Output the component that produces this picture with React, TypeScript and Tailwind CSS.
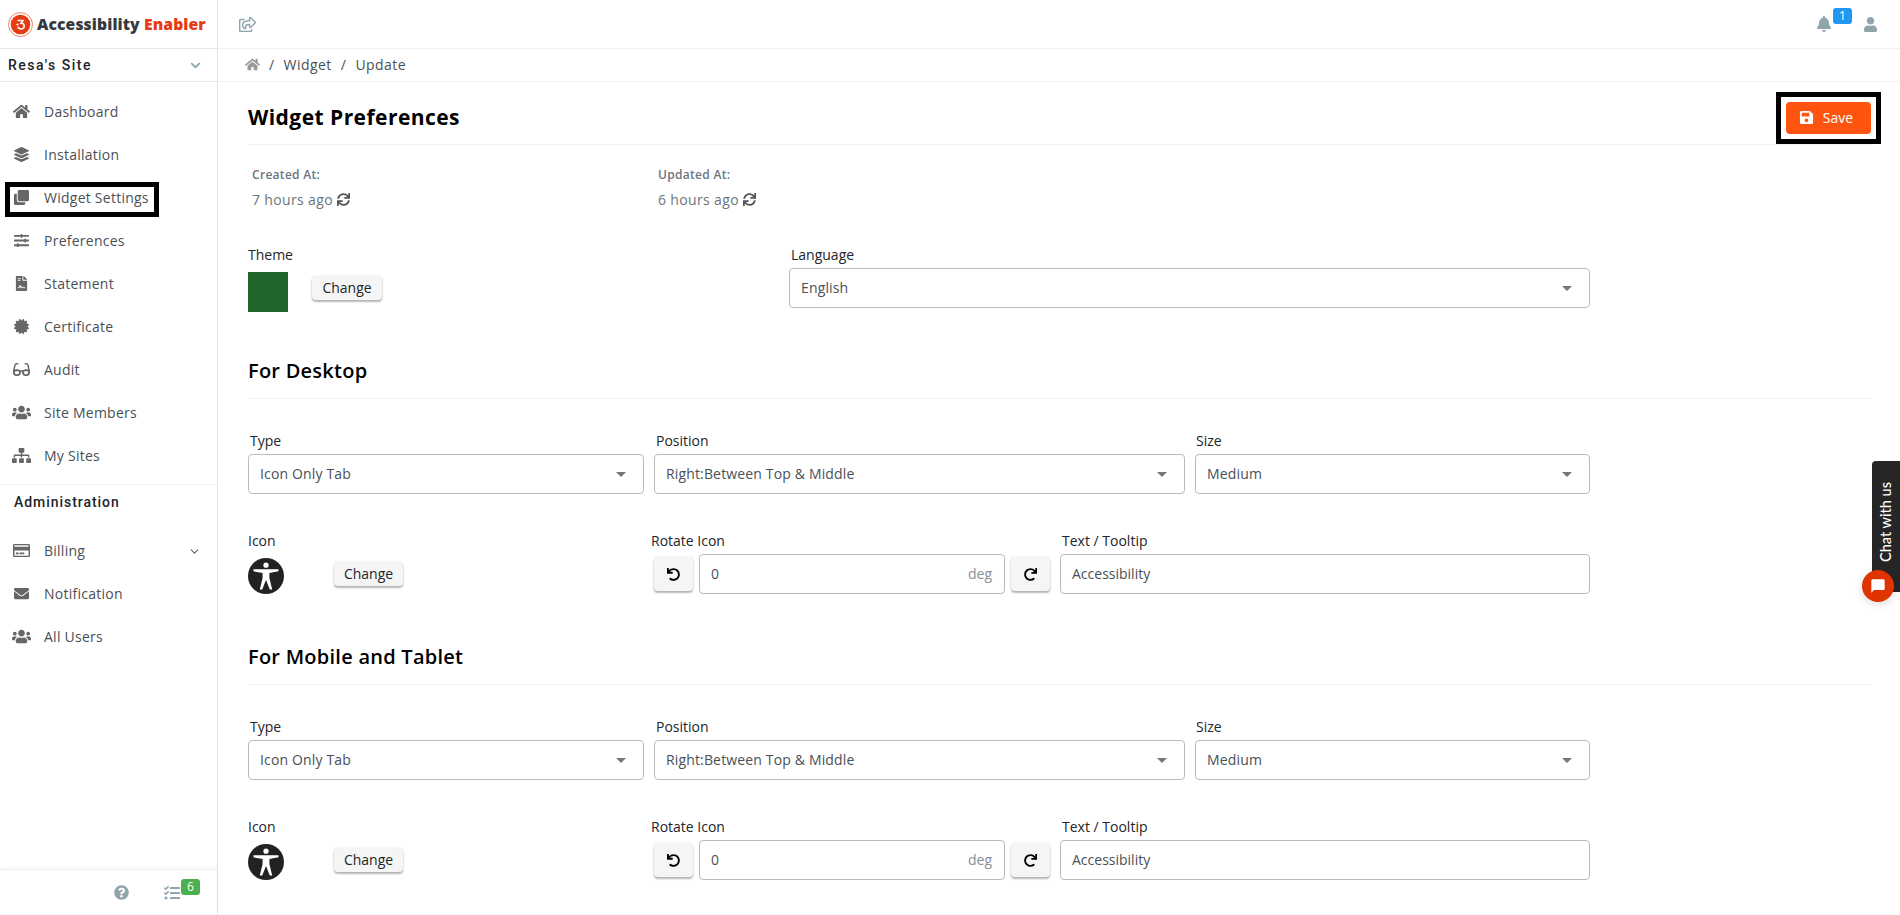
import * as React from 'react';
import {
  FaBell, FaCertificate, FaChevronDown, FaClone, FaRegCreditCard, FaEnvelope, FaFileContract, FaGlasses, FaHome,
  FaLayerGroup, FaQuestionCircle, FaRedo, FaRegShareSquare, FaSave, FaSitemap, FaSlidersH, FaSync, FaTasks,
  FaUndo, FaUser, FaUsers,
} from 'react-icons/fa';
import { FiChevronDown } from 'react-icons/fi';
import { MdChatBubble } from 'react-icons/md';

const mainNav = [
  { label: 'Dashboard', icon: FaHome, size: 'text-[17px]' },
  { label: 'Installation', icon: FaLayerGroup, size: 'text-[15px]' },
  { label: 'Widget Settings', icon: FaClone, size: 'text-[15px]', marked: true },
  { label: 'Preferences', icon: FaSlidersH, size: 'text-[15px]' },
  { label: 'Statement', icon: FaFileContract, size: 'text-[15px]' },
  { label: 'Certificate', icon: FaCertificate, size: 'text-[15px]' },
  { label: 'Audit', icon: FaGlasses, size: 'text-[17px]' },
  { label: 'Site Members', icon: FaUsers, size: 'text-[19px]' },
  { label: 'My Sites', icon: FaSitemap, size: 'text-[19px]' },
];

const adminNav = [
  { label: 'Billing', icon: FaRegCreditCard, size: 'text-[17px]', expandable: true },
  { label: 'Notification', icon: FaEnvelope, size: 'text-[15px]' },
  { label: 'All Users', icon: FaUsers, size: 'text-[19px]' },
];

const NavItem = ({ item }) => {
  const Icon = item.icon;
  return (
    <li className="relative flex h-[43px] items-center text-[14px] tracking-[0.25px] text-[#495057]">
      <span className={`flex w-[44px] shrink-0 justify-center pr-[1px] text-[#666] ${item.size}`}>
        <Icon />
      </span>
      <span>{item.label}</span>
      {item.expandable && <FiChevronDown className="absolute right-[16px] top-[16px] text-[13px] text-[#666]" />}
      {item.marked && <span className="absolute left-[5px] top-[6px] h-[35px] w-[154px] border-[5px] border-black" />}
    </li>
  );
};

const Logo = () => (
  <div className="flex items-center">
    <svg width="25" height="25" viewBox="0 0 25 25" className="ml-[8px] mr-[4px] shrink-0">
      <circle cx="12.5" cy="12.5" r="12" fill="#fff" stroke="#e8552d" strokeWidth="0.7" />
      <circle cx="12.5" cy="12.5" r="9.800" fill="#e63a14" />
      <path d="M9.500 8.500h5.500l-2 2.700c2 0 3.200 1.100 3.200 2.700 0 1.800-1.400 3-3.200 3-1.500 0-2.700-.8-3.100-2.200" fill="none" stroke="#fff" strokeWidth="1.500" />
      <circle cx="9.500" cy="12.500" r="1.100" fill="#fff" />
    </svg>
    <span className="mt-[1px] whitespace-nowrap font-['Open_Sans',sans-serif] text-[15.7px] font-extrabold tracking-[0.1px] text-[#343a40]">
      Accessibility <span className="text-[#e63a14]">Enabler</span>
    </span>
  </div>
);

const Sidebar = () => (
  <aside className="flex h-full w-[218px] shrink-0 flex-col border-r border-[#dee2e6]">
    <div className="flex h-[49px] items-center border-b border-[#e4e9f0]">
      <Logo />
    </div>
    <div className="flex h-[33px] items-center justify-between border-b border-[#e4e9f0] pl-[8px] pr-[16px]">
      <span className="font-['Roboto',sans-serif] text-[14px] font-medium tracking-[1.5px] text-[#212529]">Resa's Site</span>
      <FaChevronDown className="text-[11px] text-[#90a4ae]" />
    </div>
    <ul className="pt-[8px]">
      {mainNav.map((item) => (
        <NavItem key={item.label} item={item} />
      ))}
    </ul>
    <div className="mt-[7px] border-t border-[#f2f2f2] pl-[14px] pt-[7px] font-['Roboto',sans-serif] text-[14px] font-medium leading-[21px] tracking-[0.95px] text-[#212529]">
      Administration
    </div>
    <ul className="mt-[16px]">
      {adminNav.map((item) => (
        <NavItem key={item.label} item={item} />
      ))}
    </ul>
    <div className="relative mt-auto flex h-[46px] items-center border-t border-[#eeeeee] pl-[114px] shadow-[0_-2px_4px_rgba(0,0,0,0.03)]">
      <FaQuestionCircle className="text-[15px] text-[#90a4ae]" />
      <FaTasks className="ml-[35px] text-[16px] text-[#90a4ae]" />
      <span className="absolute left-[181px] top-[9px] flex h-[16px] w-[19px] items-center justify-center rounded-[3px] bg-[#4caf50] text-[12px] text-white">
        6
      </span>
    </div>
  </aside>
);

const TopBar = () => (
  <div className="flex h-[49px] shrink-0 items-center justify-between border-b border-[#eef0f2] pl-[21px] pr-[22px]">
    <FaRegShareSquare className="text-[17px] text-[#90a4ae]" />
    <div className="relative flex items-center">
      <FaBell className="text-[16px] text-[#90a4ae]" />
      <span className="absolute left-[17px] top-[-8px] flex h-[16px] w-[19px] items-center justify-center rounded-[3px] bg-[#2196f3] text-[12px] text-white">
        1
      </span>
      <FaUser className="ml-[31px] text-[15px] text-[#90a4ae]" />
    </div>
  </div>
);

const Breadcrumb = () => (
  <div className="flex h-[33px] shrink-0 items-center gap-[9px] border-b border-[#eef0f2] pb-[2px] pl-[27px] text-[14px] tracking-[0.45px] text-[#495057]">
    <FaHome className="text-[15px] text-[#9a9a9a]" />
    <span>/</span>
    <span>Widget</span>
    <span>/</span>
    <span>Update</span>
  </div>
);

const Label = ({ children, className = '' }) => (
  <div className={`text-[14px] leading-[21px] text-[#212529] ${className}`}>{children}</div>
);

const Select = ({ value }) => (
  <div className="flex h-[40px] items-center justify-between rounded-[4px] border border-[#bbbbbb] pb-[2px] pl-[11px] pr-[17px] text-[14px] tracking-[0.15px] text-[#495057]">
    <span>{value}</span>
    <span className="mt-[2px] h-0 w-0 border-x-[5px] border-t-[5px] border-x-transparent border-t-[#777]" />
  </div>
);

const PushButton = ({ children, className = '' }) => (
  <button className={`flex items-center justify-center rounded-[4px] bg-[#f5f5f5] text-[14px] text-[#212529] shadow-[0_2px_2px_rgba(0,0,0,0.28),0_0_2px_rgba(0,0,0,0.12)] ${className}`}>
    {children}
  </button>
);

const AccessIcon = () => (
  <svg width="36" height="36" viewBox="0 0 36 36" className="shrink-0">
    <circle cx="18" cy="18" r="18" fill="#222222" />
    <circle cx="18" cy="7.200" r="2.600" fill="#fff" />
    <path d="M5.500 11.300 L30.500 11.300 L30.500 13.300 L21.400 15 L21.400 20 L24.200 31.500 L21.800 31.500 L18 22 L14.200 31.500 L11.800 31.500 L14.600 20 L14.600 15 L5.500 13.300 Z" fill="#fff" />
  </svg>
);

const WidgetSection = ({ title }) => (
  <section>
    <h2 className="border-b border-[#eef0f2] pb-[12px] font-['Open_Sans',sans-serif] text-[20px] font-semibold leading-[30px] tracking-[0.25px] text-black">
      {title}
    </h2>
    <div className="mt-[31px] flex w-[1342px] gap-[10px]">
      <div className="w-[396px]">
        <Label className="mb-[3px] pl-[2px]">Type</Label>
        <Select value="Icon Only Tab" />
      </div>
      <div className="w-[531px]">
        <Label className="mb-[3px] pl-[2px]">Position</Label>
        <Select value="Right:Between Top & Middle" />
      </div>
      <div className="w-[395px]">
        <Label className="mb-[3px] pl-[1px]">Size</Label>
        <Select value="Medium" />
      </div>
    </div>
    <div className="mt-[36px] flex w-[1342px]">
      <div className="w-[404px]">
        <Label className="mb-[7px]">Icon</Label>
        <div className="flex items-start gap-[50px]">
          <AccessIcon />
          <PushButton className="mt-[4px] h-[24px] w-[69px] pb-[2px]">Change</PushButton>
        </div>
      </div>
      <div className="w-[408px]">
        <Label className="mb-[3px] -ml-px">Rotate Icon</Label>
        <div className="flex gap-[6px] pl-[2px]">
          <PushButton className="mt-[3px] h-[34px] w-[39px]"><FaUndo className="text-[13px] text-black" /></PushButton>
          <div className="flex h-[40px] w-[306px] items-center justify-between rounded-[4px] border border-[#bbbbbb] pb-[2px] pl-[11px] pr-[12px] text-[14px] text-[#495057]">
            <span>0</span>
            <span className="text-[#868e96]">deg</span>
          </div>
          <PushButton className="mt-[3px] h-[34px] w-[39px]"><FaRedo className="text-[13px] text-black" /></PushButton>
        </div>
      </div>
      <div className="w-[530px]">
        <Label className="mb-[3px] pl-[2px]">Text / Tooltip</Label>
        <div className="flex h-[40px] items-center rounded-[4px] border border-[#bbbbbb] pb-[2px] pl-[11px] text-[14px] text-[#495057]">
          Accessibility
        </div>
      </div>
    </div>
  </section>
);

const Stamp = ({ label, value, className = '' }) => (
  <div className={className}>
    <div className="text-[12px] font-semibold leading-[18px] tracking-[0.3px] text-[#6c757d]">{label}</div>
    <div className="mt-[5px] flex items-center gap-[4px] text-[14px] leading-[21px] tracking-[0.35px] text-[#6c757d]">
      {value}
      <FaSync className="text-[13px] text-[#555]" />
    </div>
  </div>
);

const ChatWidget = () => (
  <>
    <div className="absolute right-0 top-[461px] flex h-[131px] w-[28px] justify-center rounded-tl-[4px] bg-[#262626] pt-[21px]">
      <span className="rotate-180 self-start whitespace-nowrap font-['Lato',sans-serif] text-[14.5px] font-medium leading-[28px] text-white [writing-mode:vertical-rl]">
        Chat with us
      </span>
    </div>
    <div className="absolute left-[1862px] top-[570px] flex h-[32px] w-[32px] items-center justify-center rounded-full bg-[#e03400] shadow-[0_2px_10px_rgba(0,0,0,0.15)]">
      <MdChatBubble className="text-[16px] text-white" />
    </div>
  </>
);

export default function App() {
  return (
    <div className="relative flex h-screen overflow-hidden bg-white font-['Open_Sans',sans-serif]">
      <Sidebar />
      <main className="flex min-w-0 flex-1 flex-col">
        <TopBar />
        <Breadcrumb />
        <div className="pl-[30px] pr-[29px]">
          <div className="flex items-center justify-between border-b border-[#eef0f2] pb-[10px] pt-[20px]">
            <h1 className="-mt-[2px] font-['Open_Sans',sans-serif] text-[21px] font-bold leading-[32px] tracking-[0.45px] text-black">Widget Preferences</h1>
            <button className="relative flex h-[32px] w-[85px] items-center justify-center gap-[9px] rounded-[4px] bg-[#ff5410] pb-[1px] pr-[5px] text-[14px] text-white">
              <FaSave className="text-[15px]" />
              Save
              <span className="absolute -inset-[10px] border-[5px] border-black" />
            </button>
          </div>
          <div className="mt-[21px] flex pl-[4px]">
            <Stamp label="Created At:" value="7 hours ago" className="w-[406px]" />
            <Stamp label="Updated At:" value="6 hours ago" />
          </div>
          <div className="mt-[34px] flex w-[1342px]">
            <div className="w-[541px]">
              <Label className="mb-[7px]">Theme</Label>
              <div className="flex items-start gap-[24px]">
                <div className="h-[40px] w-[40px] bg-[#22662c]" />
                <PushButton className="mt-[4px] h-[24px] w-[70px] pb-[2px]">Change</PushButton>
              </div>
            </div>
            <div className="w-[801px]">
              <Label className="mb-[3px] pl-[2px]">Language</Label>
              <Select value="English" />
            </div>
          </div>
          <div className="mt-[44px] flex flex-col gap-[48px]">
            <WidgetSection title="For Desktop" />
            <WidgetSection title="For Mobile and Tablet" />
          </div>
        </div>
      </main>
      <ChatWidget />
    </div>
  );
}
